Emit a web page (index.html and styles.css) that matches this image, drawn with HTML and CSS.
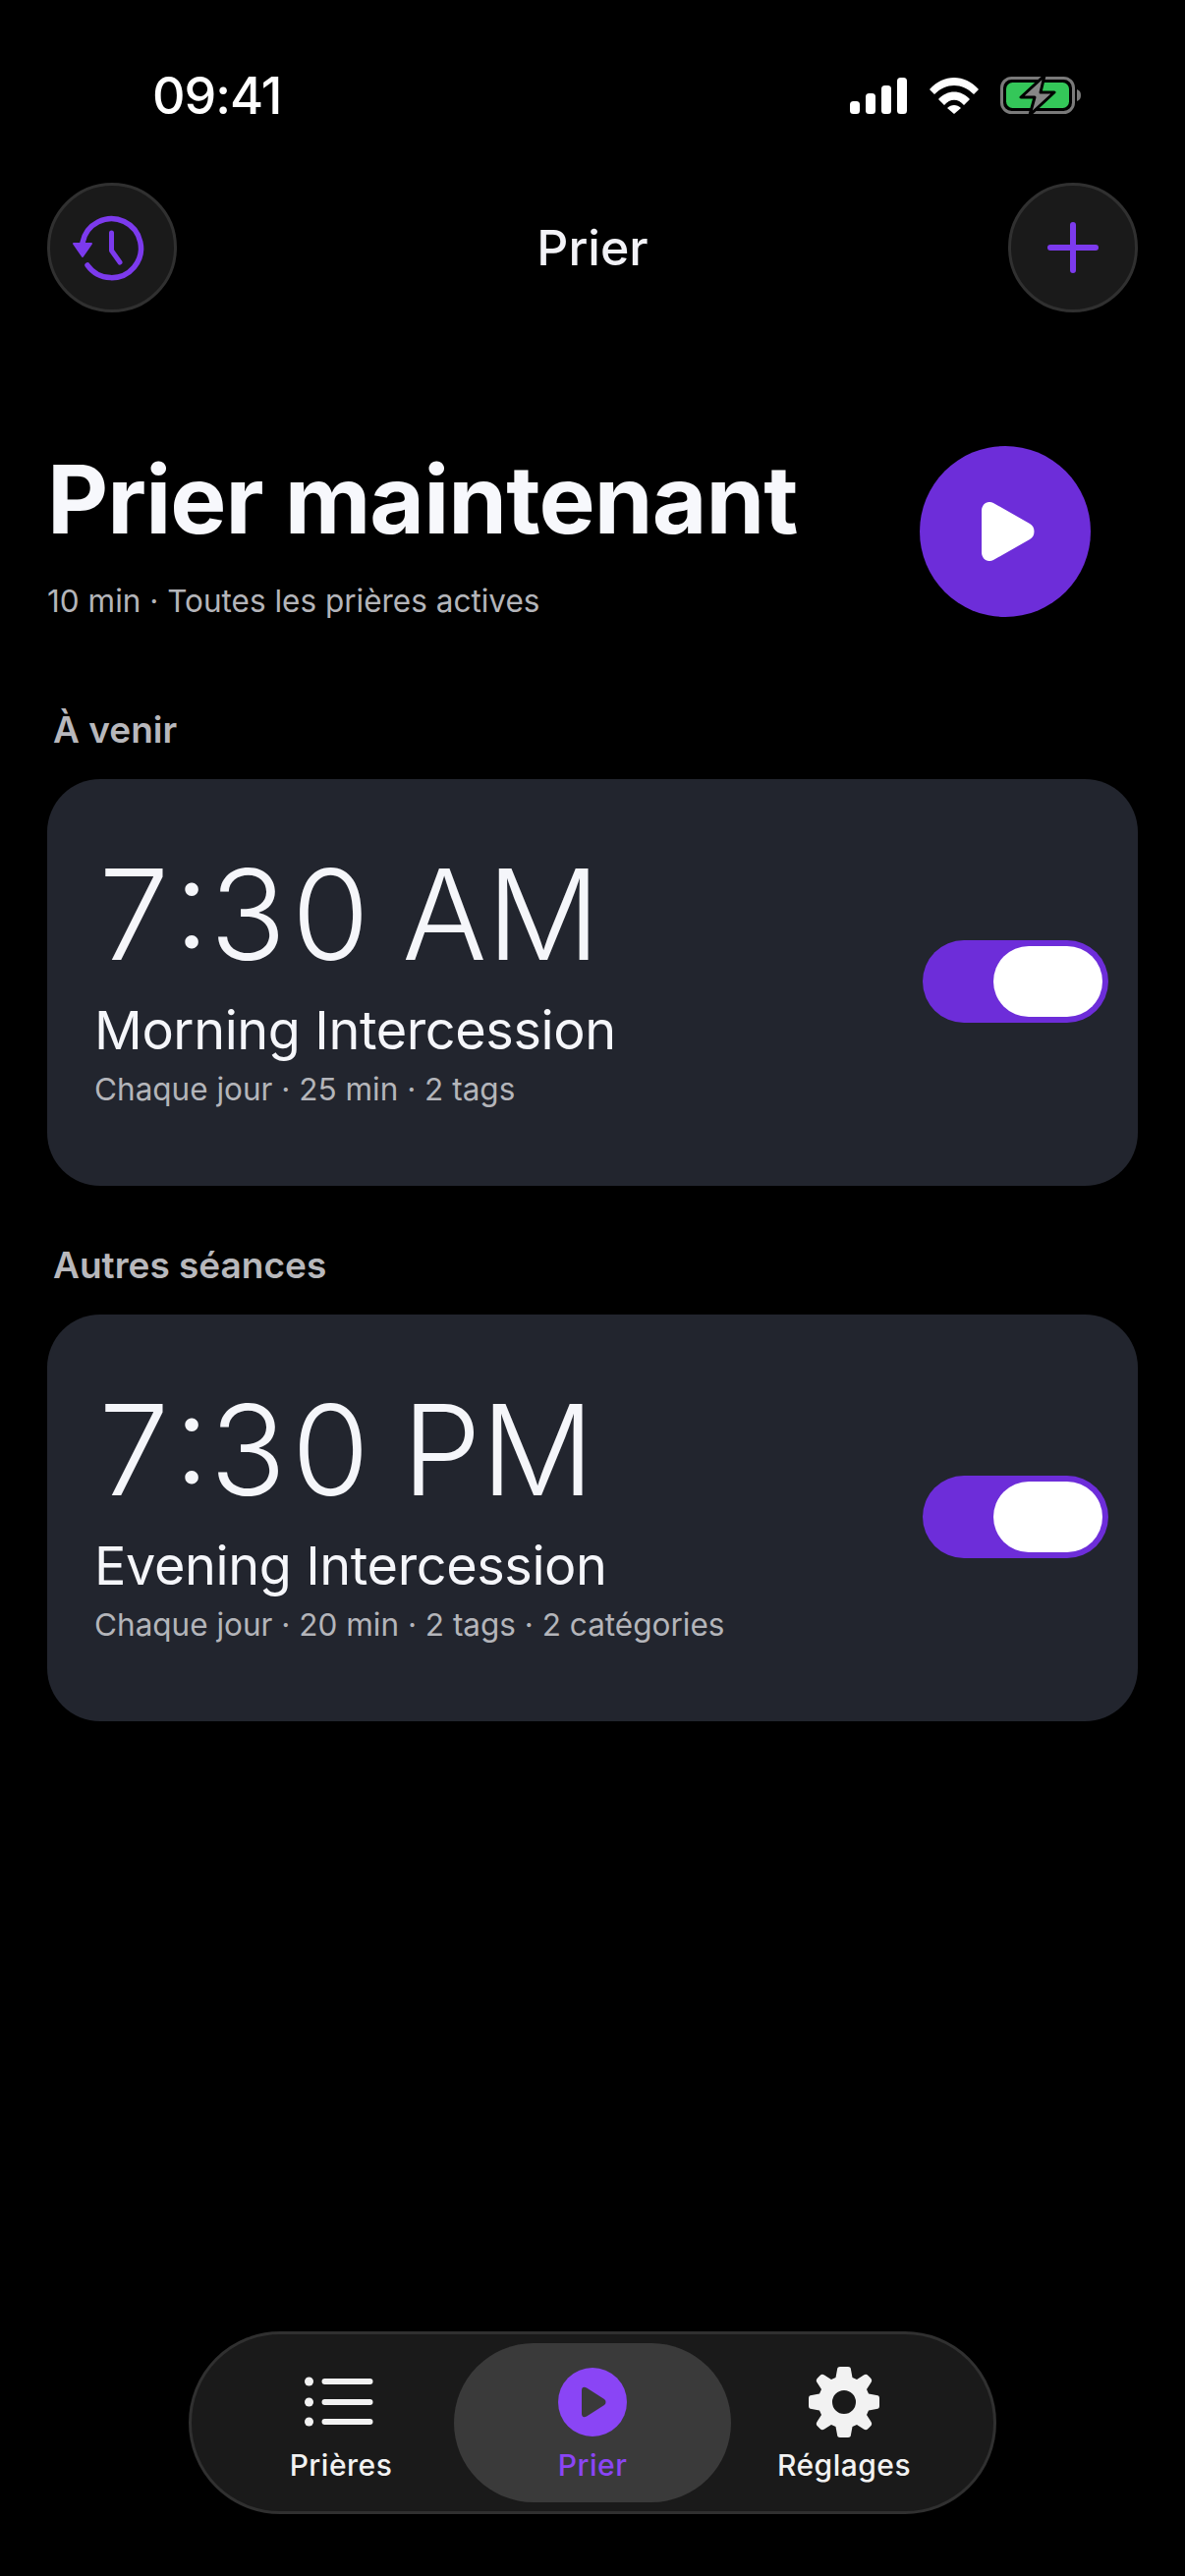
FILE: index.html
```html
<!DOCTYPE html>
<html lang="fr">
<head>
  <meta charset="UTF-8">
  <meta name="viewport" content="width=device-width, initial-scale=1.0">
  <title>Prier</title>
  <link rel="stylesheet" href="styles.css">
</head>
<body>
  <div class="screen">
    <!-- barre d'état -->
    <div class="status-bar">
      <span class="status-time">09:41</span>
      <div class="status-icons">
        <svg width="59" height="38" viewBox="0 0 59 38" fill="#fff">
          <rect x="0" y="25" width="10" height="13" rx="3.500"/>
          <rect x="16" y="17" width="10" height="21" rx="3.500"/>
          <rect x="32" y="9" width="10" height="29" rx="3.500"/>
          <rect x="48" y="1" width="10" height="37" rx="3.500"/>
        </svg>
        <svg width="50" height="38" viewBox="0 0 50 38" fill="#fff">
          <path d="M0 13 C14 -3 36 -3 50 13 L45 18 C33 6 17 6 5 18 Z"/>
          <path d="M9 23 C18 13 32 13 41 23 L35 29 C29 22 21 22 15 29 Z"/>
          <path d="M18 32 C22 28 28 28 32 32 L25 38 Z"/>
        </svg>
        <svg width="84" height="42" viewBox="0 0 84 42">
          <rect x="1.500" y="3.500" width="73" height="35" rx="10" fill="none" stroke="#7a7a7a" stroke-width="3"/>
          <rect x="6" y="8" width="64" height="26" rx="6.500" fill="#34c759"/>
          <path d="M78 15 C81 16 82 18 82 21 C82 24 81 26 78 27 Z" fill="#7a7a7a"/>
          <path d="M45 1 L21 23 L35 23 L30 41 L55 18 L41 18 Z" fill="#868686" stroke="#000" stroke-width="3" stroke-linejoin="round"/>
        </svg>
      </div>
    </div>

    <header class="top-bar">
      <button class="round-btn">
        <svg width="80" height="80" viewBox="0 0 80 80" fill="none" stroke="#7c3aed" stroke-width="5.500" stroke-linecap="round" stroke-linejoin="round">
          <path d="M10 35 A30 30 0 1 1 15 58"/>
          <path d="M1 36 H19 L10 49 Z" fill="#7c3aed" stroke-width="2"/>
          <path d="M39.500 25 V43 L48 55" stroke-width="5"/>
        </svg>
      </button>
      <h2 class="top-title">Prier</h2>
      <button class="round-btn">
        <svg width="56" height="56" viewBox="0 0 56 56" fill="none" stroke="#7c3aed" stroke-width="6" stroke-linecap="round">
          <path d="M28 5 V51 M5 28 H51"/>
        </svg>
      </button>
    </header>

    <section class="hero">
      <div class="hero-text">
        <h1>Prier maintenant</h1>
        <p>10 min · Toutes les prières actives</p>
      </div>
      <button class="hero-play">
        <svg width="54" height="60" viewBox="0 0 54 60" fill="#fff">
          <path d="M0 9 C0 2 6 -2 12 1 L49 22 C55 25 55 35 49 38 L12 59 C6 62 0 58 0 51 Z"/>
        </svg>
      </button>
    </section>

    <h3 class="section-label">À venir</h3>
    <div class="card">
      <div class="card-text">
        <div class="card-time">7:30 AM</div>
        <div class="card-name">Morning Intercession</div>
        <div class="card-meta">Chaque jour · 25 min · 2 tags</div>
      </div>
      <div class="toggle"><span class="knob"></span></div>
    </div>

    <h3 class="section-label">Autres séances</h3>
    <div class="card">
      <div class="card-text">
        <div class="card-time">7:30 PM</div>
        <div class="card-name">Evening Intercession</div>
        <div class="card-meta">Chaque jour · 20 min · 2 tags · 2 catégories</div>
      </div>
      <div class="toggle"><span class="knob"></span></div>
    </div>

    <!-- barre du bas -->
    <nav class="tab-bar">
      <div class="tab">
        <svg class="icon-list" width="70" height="72" viewBox="0 0 70 72" fill="#f2f2f2">
          <circle cx="4.500" cy="15" r="4.500"/>
          <circle cx="4.500" cy="36" r="4.500"/>
          <circle cx="4.500" cy="56" r="4.500"/>
          <rect x="17.500" y="12" width="52" height="6" rx="3"/>
          <rect x="17.500" y="33" width="52" height="6" rx="3"/>
          <rect x="17.500" y="53" width="52" height="6" rx="3"/>
        </svg>
        <span>Prières</span>
      </div>
      <div class="tab tab-active">
        <svg width="72" height="72" viewBox="0 0 72 72">
          <circle cx="36" cy="36" r="35" fill="#8a45f5"/>
          <path d="M25 24 C25 21 27 20 30 21.500 L48 33 C50 34.500 50 37.500 48 39 L30 50.500 C27 52 25 51 25 48 Z" fill="#3a3a3a"/>
        </svg>
        <span>Prier</span>
      </div>
      <div class="tab">
        <svg width="72" height="72" viewBox="0 0 72 72" fill="#f2f2f2" fill-rule="evenodd">
          <path d="M29 3 C29 1 30 0 32 0 H40 C42 0 43 1 43 3 L44.500 11 L49 13 L56 8.500 C57.500 7.500 59 7.500 60.500 9 L63 11.500 C64.500 13 64.500 14.500 63.500 16 L59 23 L61 27.500 L69 29 C71 29 72 30 72 32 V40 C72 42 71 43 69 43 L61 44.500 L59 49 L63.500 56 C64.500 57.500 64.500 59 63 60.500 L60.500 63 C59 64.500 57.500 64.500 56 63.500 L49 59 L44.500 61 L43 69 C43 71 42 72 40 72 H32 C30 72 29 71 29 69 L27.500 61 L23 59 L16 63.500 C14.500 64.500 13 64.500 11.500 63 L9 60.500 C7.500 59 7.500 57.500 8.500 56 L13 49 L11 44.500 L3 43 C1 43 0 42 0 40 V32 C0 30 1 29 3 29 L11 27.500 L13 23 L8.500 16 C7.500 14.500 7.500 13 9 11.500 L11.500 9 C13 7.500 14.500 7.500 16 8.500 L23 13 L27.500 11 Z M36 24 A12 12 0 1 0 36 48 A12 12 0 1 0 36 24 Z"/>
        </svg>
        <span>Réglages</span>
      </div>
    </nav>
  </div>
</body>
</html>
```

FILE: styles.css
```css
* {
  box-sizing: border-box;
}

body {
  margin: 0;
  background-color: #000;
  font-family: Inter, "Noto Sans", sans-serif;
  color: #fff;
}

.screen {
  width: 1206px;
  height: 2622px;
  display: flex;
  flex-direction: column;
  padding: 0 48px;
  overflow: hidden;
}

/* barre d'état */
.status-bar {
  height: 186px;
  display: flex;
  justify-content: space-between;
  align-items: flex-start;
  padding: 66px 56px 0 107px;
}

.status-time {
  font-size: 52px;
  font-weight: 500;
  letter-spacing: -1px;
  line-height: 63px;
}

.status-icons {
  display: flex;
  align-items: center;
  gap: 22px;
  margin-top: 10px;
}

/* en-tête */
.top-bar {
  display: flex;
  justify-content: space-between;
  align-items: center;
}

.round-btn {
  width: 132px;
  height: 132px;
  padding: 0;
  border-radius: 50%;
  border: 3px solid #303030;
  background-color: #1a1a1a;
  display: flex;
  align-items: center;
  justify-content: center;
}

.top-title {
  margin: 0;
  font-size: 50px;
  font-weight: 500;
  color: #f2f2f7;
}

.hero {
  display: flex;
  justify-content: space-between;
  align-items: center;
  margin-top: 132px;
  padding-right: 48px;
}

.hero h1 {
  margin: 0;
  font-size: 96px;
  font-weight: 700;
  letter-spacing: -0.9px;
  line-height: 116px;
  color: #f7f8fc;
}

.hero p {
  margin: 26px 0 0;
  font-size: 31.500px;
  line-height: 40px;
  color: #b4b5ba;
}

.hero-play {
  width: 174px;
  height: 174px;
  padding: 0 0 0 6px;
  border: none;
  border-radius: 50%;
  background-color: #6d2dd9;
  display: flex;
  align-items: center;
  justify-content: center;
}

.section-label {
  margin: 0 0 28px 6px;
  font-size: 37px;
  font-weight: 600;
  line-height: 44px;
  color: #b8b8bc;
}

.hero + .section-label {
  margin-top: 89px;
}

.card + .section-label {
  margin-top: 59px;
}

.card {
  height: 414px;
  padding: 74px 30px 0 48px;
  border-radius: 54px;
  background-color: #22252e;
  display: flex;
  justify-content: space-between;
  align-items: flex-start;
}

.card-text {
  display: flex;
  flex-direction: column;
}

.card-time {
  margin-left: -1px;
  font-size: 128px;
  font-weight: 300;
  font-variant-numeric: tabular-nums;
  word-spacing: -3px;
  line-height: 128px;
  color: #f5f6fa;
}

.card-name {
  margin-top: 21px;
  font-size: 54px;
  letter-spacing: -0.4px;
  line-height: 66px;
  color: #f5f6fa;
}

.card-meta {
  margin-top: 7px;
  font-size: 31.500px;
  line-height: 40px;
  color: #b4b5ba;
}

.toggle {
  width: 189px;
  height: 84px;
  margin-top: 90px;
  padding: 6px;
  border-radius: 42px;
  background-color: #6d2dd9;
  display: flex;
  justify-content: flex-end;
}

.knob {
  width: 111px;
  height: 72px;
  border-radius: 36px;
  background-color: #fff;
}

/* barre du bas */
.tab-bar {
  align-self: center;
  width: 822px;
  height: 186px;
  margin-top: auto;
  margin-bottom: 63px;
  padding: 9px;
  border: 3px solid #303030;
  border-radius: 93px;
  background-color: #1a1a1a;
  display: grid;
  grid-template-columns: 1fr 282px 1fr;
}

.tab {
  display: flex;
  flex-direction: column;
  align-items: center;
  padding-top: 24px;
  border-radius: 81px;
  font-size: 30px;
  font-weight: 500;
  letter-spacing: 0.5px;
  line-height: 36px;
  color: #f2f2f2;
}

.tab:first-child {
  padding-left: 28px;
}

.tab:last-child {
  padding-right: 28px;
}

.tab span {
  margin-top: 10px;
}

.icon-list {
  margin-right: 4px;
}

.tab-active {
  background-color: #3a3a3a;
  color: #8a45f5;
}
```
